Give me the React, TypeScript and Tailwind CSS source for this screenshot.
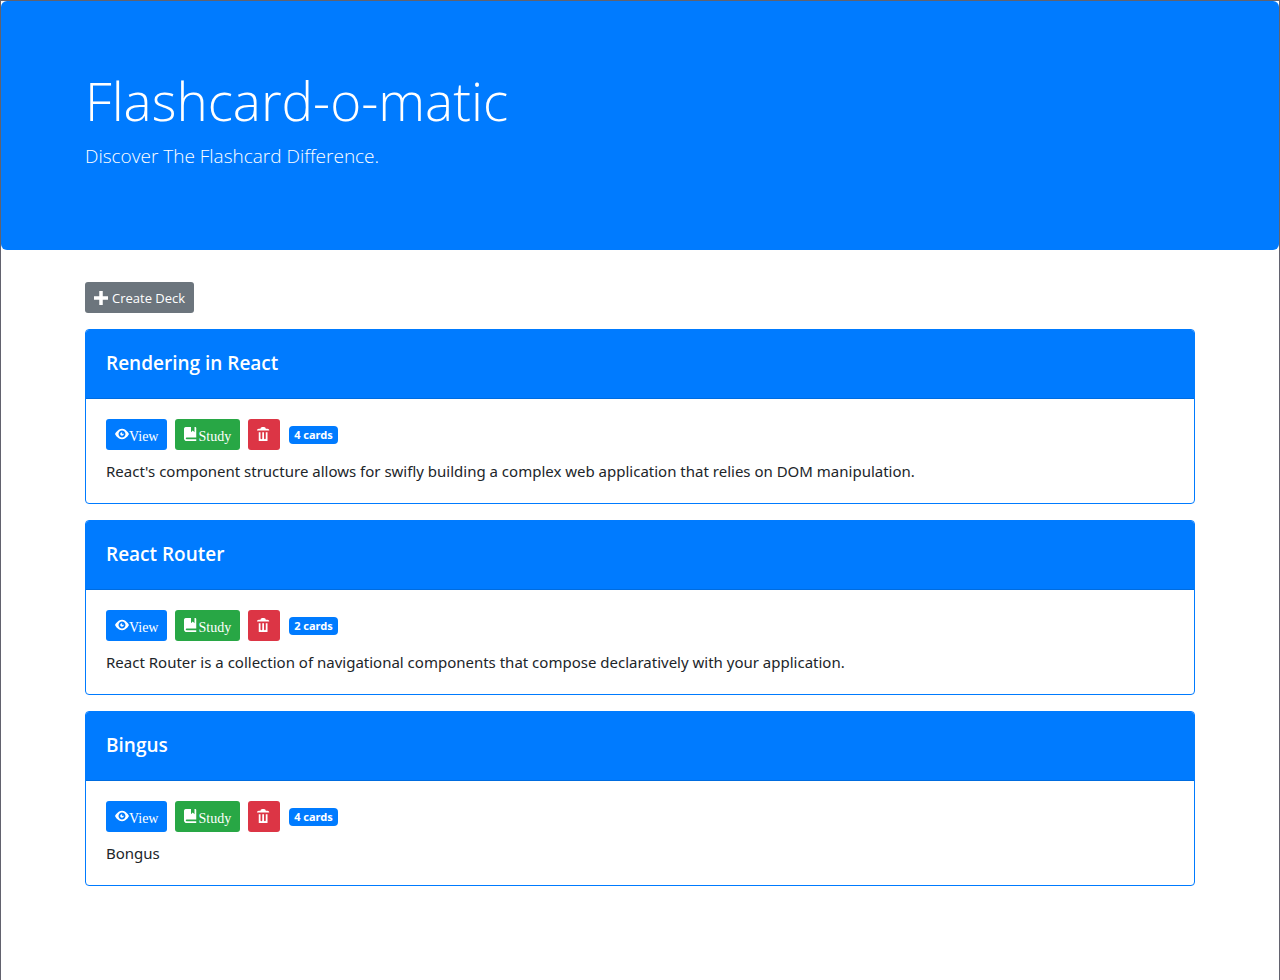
import React from "react";

const icons = {
  plus: "M3 0v3h-3v2h3v3h2v-3h3v-2h-3v-3h-2z",
  eye: "M4.03 1c-2.53 0-4.03 3-4.03 3s1.5 3 4.03 3c2.47 0 3.97-3 3.97-3s-1.5-3-3.97-3zm-.03 1c1.11 0 2 .9 2 2 0 1.11-.89 2-2 2-1.1 0-2-.89-2-2 0-1.1.9-2 2-2zm0 1c-.55 0-1 .45-1 1s.45 1 1 1 1-.45 1-1c0-.1-.04-.19-.06-.28-.08.16-.24.28-.44.28-.28 0-.5-.22-.5-.5 0-.2.12-.36.28-.44-.09-.03-.18-.06-.28-.06z",
  book: "M1 0l-.09.03c-.46.09-.79.42-.88.88l-.03.09v5.5c0 .83.67 1.5 1.5 1.5h5.5v-1h-5.5c-.28 0-.5-.22-.5-.5s.22-.5.5-.5h5.5v-5.5c0-.28-.22-.5-.5-.5h-.5v3l-1-1-1 1v-3h-3z",
  trash:
    "M3 0c-.55 0-1 .45-1 1h-1c-.55 0-1 .45-1 1h7c0-.55-.45-1-1-1h-1c0-.55-.45-1-1-1h-1zm-2 3v4.81c0 .11.08.19.19.19h4.63c.11 0 .19-.08.19-.19v-4.81h-1v3.5c0 .28-.22.5-.5.5s-.5-.22-.5-.5v-3.5h-1v3.5c0 .28-.22.5-.5.5s-.5-.22-.5-.5v-3.5h-1z",
};

function Icon({ name }: { name: keyof typeof icons }) {
  return (
    <svg viewBox="0 0 8 8" className="size-3.5 shrink-0 fill-current" aria-hidden="true">
      <path d={icons[name]} />
    </svg>
  );
}

interface Deck {
  name: string;
  description: string;
  cards: number;
}

const decks: Deck[] = [
  {
    name: "Rendering in React",
    description:
      "React's component structure allows for swifly building a complex web application that relies on DOM manipulation.",
    cards: 4,
  },
  {
    name: "React Router",
    description:
      "React Router is a collection of navigational components that compose declaratively with your application.",
    cards: 2,
  },
  { name: "Bingus", description: "Bongus", cards: 4 },
];

function DeckCard({ deck }: { deck: Deck }) {
  return (
    <article className="overflow-hidden rounded border border-[#007bff] bg-white">
      <header className="border-b border-[#006cdf] bg-[#007bff] px-5 pt-[21px] pb-[23px] text-white">
        <h2 className="text-[19px] leading-6 font-semibold">{deck.name}</h2>
      </header>
      <div className="p-5">
        <div className="flex items-center gap-2">
          <a
            href="#view"
            className="flex h-[31px] items-center rounded-[3px] bg-[#007bff] px-[9px] pb-px font-['Liberation_Serif',serif] text-sm text-white"
          >
            <Icon name="eye" />
            <span className="pt-1.5">View</span>
          </a>
          <a
            href="#study"
            className="flex h-[31px] items-center rounded-[3px] bg-[#28a745] px-[9px] pb-px font-['Liberation_Serif',serif] text-sm text-white"
          >
            <Icon name="book" />
            <span className="pt-1.5">Study</span>
          </a>
          <button
            type="button"
            aria-label={`Delete ${deck.name}`}
            className="flex h-[31px] items-center rounded-[3px] bg-[#dc3545] px-[9px] pb-px text-white"
          >
            <Icon name="trash" />
          </button>
          <span className="ml-px rounded bg-[#007bff] px-[5px] font-['Noto_Sans',sans-serif] text-[11px] leading-[18px] font-bold text-white">
            {deck.cards} cards
          </span>
        </div>
        <p className="mt-[9px] font-['Noto_Sans',sans-serif] text-[15px] leading-6">
          {deck.description}
        </p>
      </div>
    </article>
  );
}

export default function App() {
  return (
    <div className="min-h-screen border border-b-0 border-[#62626e] bg-white font-['Open_Sans','Noto_Sans',sans-serif] text-[#212529]">
      <header className="rounded-md bg-[#007bff] pt-[66px] pb-[62px] text-white">
        <div className="mx-auto max-w-[1140px] px-[15px]">
          <h1 className="text-[53px] leading-[67px] font-light">Flashcard-o-matic</h1>
          <p className="mt-[7px] mb-[17px] text-[19px] leading-[30px] font-light">
            Discover The Flashcard Difference.
          </p>
        </div>
      </header>
      <main className="mx-auto mt-8 max-w-[1140px] px-[15px] pb-8">
        <button
          type="button"
          className="flex h-[31px] items-center gap-1 rounded-[3px] bg-[#6c757d] px-[9px] text-[13px] text-white"
        >
          <Icon name="plus" />
          <span className="pt-0.5">Create Deck</span>
        </button>
        <div className="mt-4 flex flex-col gap-4">
          {decks.map((deck) => (
            <DeckCard key={deck.name} deck={deck} />
          ))}
        </div>
      </main>
    </div>
  );
}
